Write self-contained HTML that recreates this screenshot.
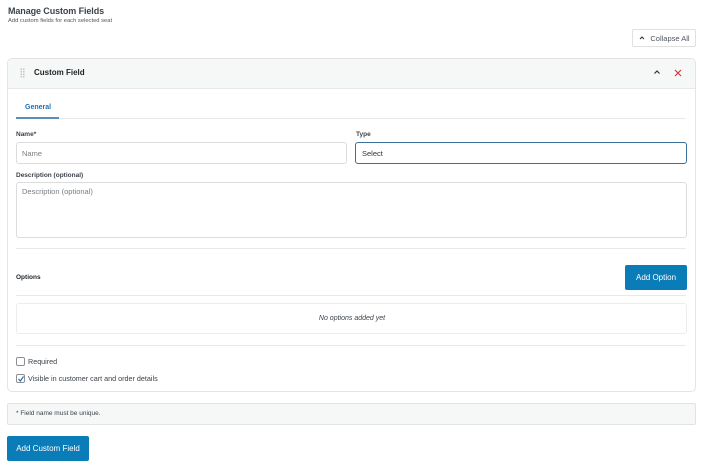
<!DOCTYPE html>
<html><head><meta charset="utf-8"><style>
*{box-sizing:border-box;margin:0;padding:0}
body{width:704px;height:466px;background:#fff;font-family:"Liberation Sans",sans-serif;color:#1d2327;position:relative;overflow:hidden}
.a{position:absolute}
.t{font-size:7.5px;white-space:nowrap}
.in{position:absolute;border:1px solid #dcdcde;border-radius:3px;background:#fff}
.line{position:absolute;height:1px;background:#e8e8ea}
.btn{position:absolute;background:#0a7cb8;color:#fff;border-radius:2px;font-size:8px;display:flex;align-items:center;justify-content:center}
.cb{position:absolute;width:9px;height:9px;border:1px solid #8c8f94;border-radius:2px;background:#fff}
.lb{font-size:6.5px;font-weight:bold;color:#3c434a}
</style></head><body>
<div class="a" style="left:8px;top:6px;font-size:9px;color:#3c434a;font-weight:bold;letter-spacing:-0.1px">Manage Custom Fields</div>
<div class="a t" style="left:8px;top:18px;font-size:5.8px;color:#50575e">Add custom fields for each selected seat</div>
<div class="a" style="left:632px;top:29px;width:64px;height:18px;border:1px solid #e0e0e0;border-radius:2px;font-size:7.5px;color:#50575e;display:flex;align-items:center;justify-content:center">
<svg width="8" height="6" viewBox="0 0 8 6" style="margin-right:4px"><path d="M2 4L4 2L6 4" stroke="#333" stroke-width="1.1" fill="none"/></svg>Collapse All</div>

<div class="a" style="left:7px;top:58px;width:689px;height:334px;border:1px solid #e4e4e6;border-radius:5px;overflow:hidden">
<div class="a" style="left:0;top:0;width:100%;height:30px;background:#f6f7f7;border-bottom:1px solid #e8e8ea"></div>
</div>
<div class="a" style="left:20px;top:68px;width:5px;height:10px;background-image:radial-gradient(circle,#c3c4c7 0.8px,transparent 1px);background-size:2.5px 2.5px"></div>
<div class="a" style="left:34px;top:68px;font-size:8px;font-weight:bold;color:#1d2327">Custom Field</div>
<svg class="a" style="left:653px;top:69px" width="8" height="6" viewBox="0 0 8 6"><path d="M1.5 4.5L4 2L6.5 4.5" stroke="#333" stroke-width="1.2" fill="none"/></svg>
<svg class="a" style="left:674px;top:69px" width="8" height="8" viewBox="0 0 8 8"><path d="M1 1L7 7M7 1L1 7" stroke="#d63638" stroke-width="1.2"/></svg>

<div class="a t" style="left:25px;top:104px;color:#2271b1;font-weight:bold;font-size:7px">General</div>
<div class="line" style="left:16px;top:118px;width:670px"></div>
<div class="a" style="left:16px;top:117px;width:43px;height:2px;background:#5a8fb3"></div>

<div class="a t lb" style="left:16px;top:131px">Name*</div>
<div class="in" style="left:16px;top:142px;width:331px;height:22px"></div>
<div class="a t" style="left:22px;top:149px;color:#787c82">Name</div>
<div class="a t lb" style="left:356px;top:131px">Type</div>
<div class="in" style="left:355px;top:142px;width:332px;height:22px;border-color:#3c6f96;border-width:1.3px"></div>
<div class="a t" style="left:362px;top:149px;color:#2c3338">Select</div>

<div class="a t lb" style="left:16px;top:172px">Description (optional)</div>
<div class="in" style="left:16px;top:182px;width:671px;height:56px"></div>
<div class="a t" style="left:22px;top:187px;color:#787c82">Description (optional)</div>

<div class="line" style="left:16px;top:248px;width:670px"></div>
<div class="a t lb" style="left:16px;top:274px;color:#1d2327">Options</div>
<div class="btn" style="left:625px;top:265px;width:62px;height:25px">Add Option</div>
<div class="line" style="left:16px;top:295px;width:670px"></div>
<div class="in" style="left:16px;top:303px;width:671px;height:31px;border-color:#eceded"></div>
<div class="a t" style="left:0;top:315px;width:704px;text-align:center;font-style:italic;font-size:7px;color:#3c434a">No options added yet</div>
<div class="line" style="left:16px;top:345px;width:670px"></div>

<div class="cb" style="left:16px;top:357px"></div>
<div class="a t" style="left:28px;top:357px;font-size:7.2px;color:#3c434a">Required</div>
<div class="cb" style="left:16px;top:374px"></div>
<svg class="a" style="left:17px;top:375px" width="8" height="8" viewBox="0 0 8 8"><path d="M1.5 4L3.3 6L6.5 1.5" stroke="#2271b1" stroke-width="1.2" fill="none"/></svg>
<div class="a t" style="left:28px;top:374px;font-size:7.2px;color:#3c434a">Visible in customer cart and order details</div>

<div class="a" style="left:7px;top:403px;width:689px;height:22px;background:#f6f7f7;border:1px solid #e2e3e4;border-radius:2px"></div>
<div class="a t" style="left:16px;top:410px;font-size:6.5px;color:#3c434a">* Field name must be unique.</div>

<div class="btn" style="left:7px;top:436px;width:82px;height:25px">Add Custom Field</div>
</body></html>
